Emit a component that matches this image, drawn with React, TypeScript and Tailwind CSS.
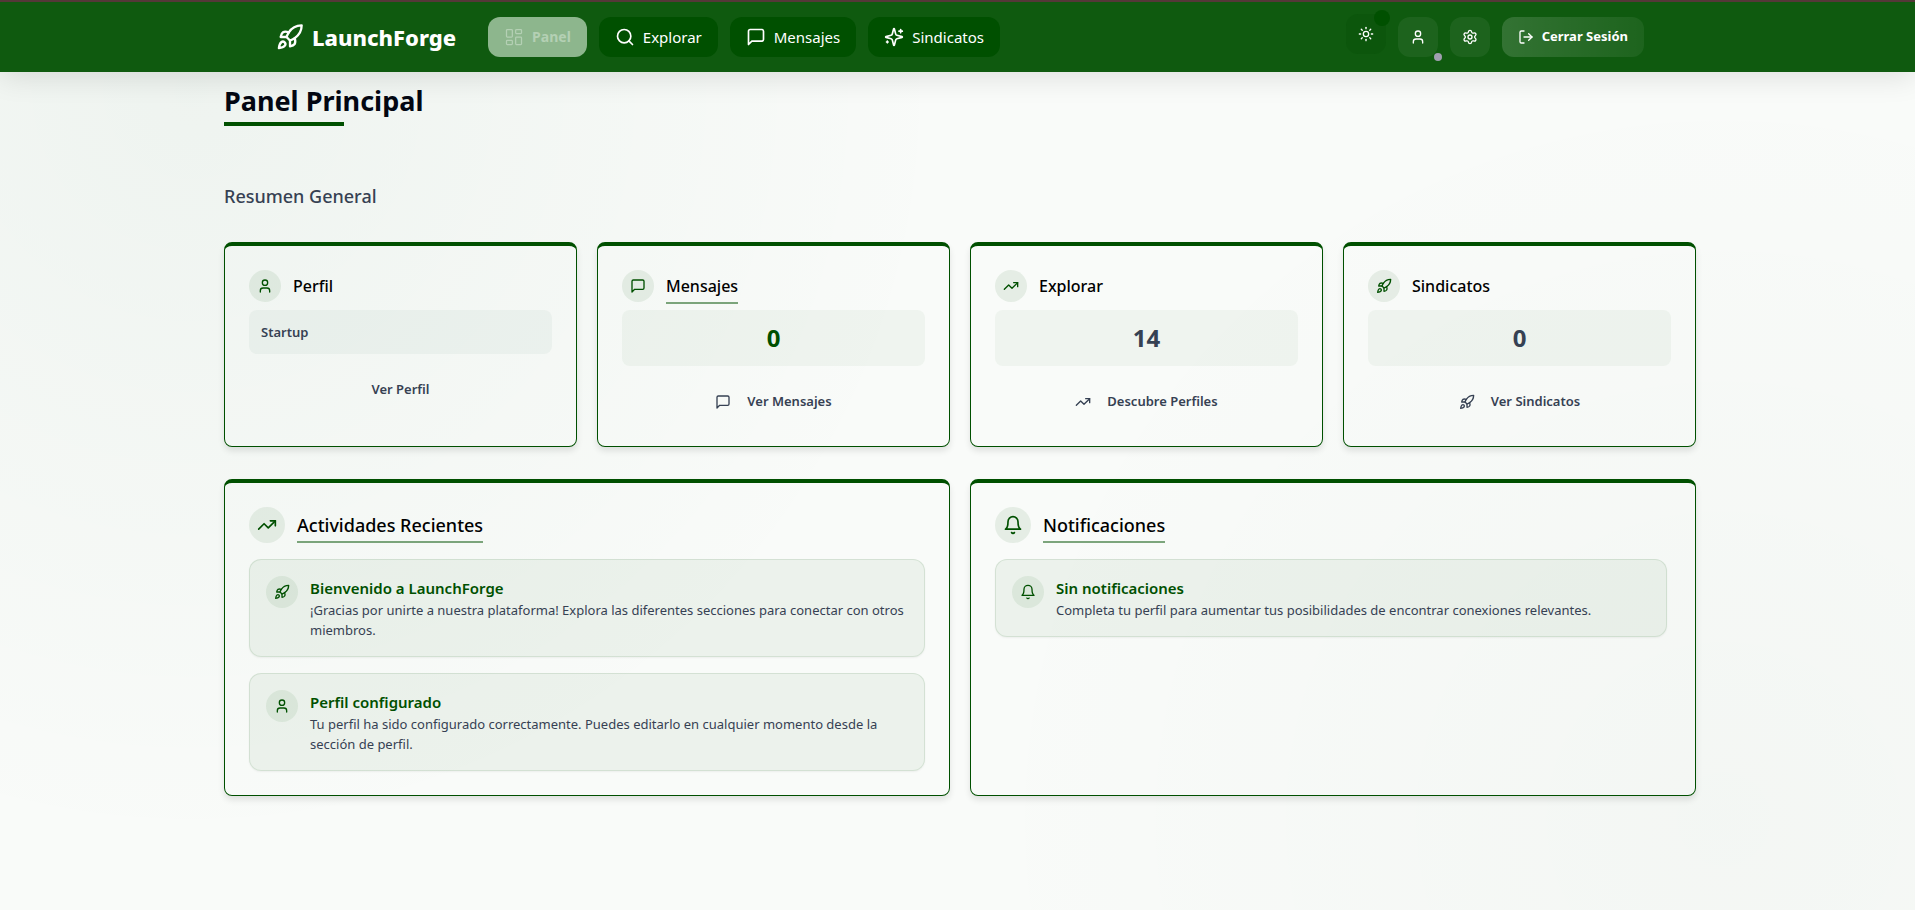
import type { ComponentType, ReactNode } from 'react';
import { LayoutDashboard, LogOut, Rocket, Search, Settings, Sun, TrendingUp, User } from 'lucide-react';

interface IconProps {
  size?: number;
}

type Icon = ComponentType<IconProps>;

function StrokeIcon({ size = 24, children }: IconProps & { children: ReactNode }) {
  return (
    <svg
      width={size}
      height={size}
      viewBox="0 0 24 24"
      fill="none"
      stroke="currentColor"
      strokeWidth={2}
      strokeLinecap="round"
      strokeLinejoin="round"
      aria-hidden="true"
    >
      {children}
    </svg>
  );
}

function Message({ size }: IconProps) {
  return (
    <StrokeIcon size={size}>
      <path d="M21 15a2 2 0 0 1-2 2H7l-4 4V5a2 2 0 0 1 2-2h14a2 2 0 0 1 2 2z" />
    </StrokeIcon>
  );
}

function Sparkles({ size }: IconProps) {
  return (
    <StrokeIcon size={size}>
      <path d="M9.937 15.5A2 2 0 0 0 8.5 14.063l-6.135-1.582a.5.5 0 0 1 0-.962L8.5 9.936A2 2 0 0 0 9.937 8.5l1.582-6.135a.5.5 0 0 1 .963 0L14.063 8.5A2 2 0 0 0 15.5 9.937l6.135 1.581a.5.5 0 0 1 0 .964L15.5 14.063a2 2 0 0 0-1.437 1.437l-1.582 6.135a.5.5 0 0 1-.963 0z" />
      <path d="M20 3v4M22 5h-4M4 17v2M5 18H3" />
    </StrokeIcon>
  );
}

function Bell({ size }: IconProps) {
  return (
    <StrokeIcon size={size}>
      <path d="M6 8a6 6 0 0 1 12 0c0 7 3 9 3 9H3s3-2 3-9" />
      <path d="M10.3 21a1.94 1.94 0 0 0 3.4 0" />
    </StrokeIcon>
  );
}

const navItems = [
  { label: 'Explorar', icon: Search },
  { label: 'Mensajes', icon: Message },
  { label: 'Sindicatos', icon: Sparkles },
];

const activities = [
  {
    icon: Rocket,
    title: 'Bienvenido a LaunchForge',
    text: '¡Gracias por unirte a nuestra plataforma! Explora las diferentes secciones para conectar con otros miembros.',
  },
  {
    icon: User,
    title: 'Perfil configurado',
    text: 'Tu perfil ha sido configurado correctamente. Puedes editarlo en cualquier momento desde la sección de perfil.',
  },
];

export default function App() {
  return (
    <div className="min-h-screen overflow-hidden bg-[#f9fbf9] bg-[radial-gradient(circle_at_10%_10%,rgba(0,80,30,0.045),transparent_40%),radial-gradient(circle_at_90%_90%,rgba(0,60,20,0.025),transparent_40%)] font-['Noto_Sans','Open_Sans',sans-serif] text-gray-700">
      <Navbar />

      <div className="pl-[5px]">
        <main className="mx-auto max-w-[1536px] px-8 pt-2 pb-16">
          <h1 className="relative inline-block text-[27px] leading-[42px] font-bold text-gray-950">
            Panel Principal
            <span className="absolute -bottom-1 left-0 h-1 w-3/5 bg-[#005000]" />
          </h1>

          <h2 className="mt-15 mb-8 text-lg leading-7 font-medium">Resumen General</h2>

          <div className="grid grid-cols-1 gap-5 md:grid-cols-2 lg:grid-cols-4">
            <Card>
              <CardTitle icon={User} title="Perfil" />
              <div className="mt-2 rounded-lg bg-[#005030]/4 p-3 text-[13px] leading-5 font-semibold">Startup</div>
              <CardButton label="Ver Perfil" />
            </Card>
            <Card>
              <CardTitle icon={Message} title="Mensajes" underline />
              <div className="mt-2 rounded-lg bg-[#005000]/4 p-3 text-center text-2xl font-bold text-[#005000]">0</div>
              <CardButton icon={Message} label="Ver Mensajes" />
            </Card>
            <Card>
              <CardTitle icon={TrendingUp} title="Explorar" />
              <div className="mt-2 rounded-lg bg-[#005000]/4 p-3 text-center text-2xl font-bold">14</div>
              <CardButton icon={TrendingUp} label="Descubre Perfiles" />
            </Card>
            <Card>
              <CardTitle icon={Rocket} title="Sindicatos" />
              <div className="mt-2 rounded-lg bg-[#005000]/4 p-3 text-center text-2xl font-bold">0</div>
              <CardButton icon={Rocket} label="Ver Sindicatos" />
            </Card>
          </div>

          <div className="mt-8 grid grid-cols-1 gap-5 lg:grid-cols-2">
            <Card>
              <SectionTitle icon={TrendingUp} title="Actividades Recientes" />
              <div className="mt-4 space-y-4">
                {activities.map(item => (
                  <FeedItem key={item.title} icon={item.icon} title={item.title} text={item.text} />
                ))}
              </div>
            </Card>
            <Card>
              <SectionTitle icon={Bell} title="Notificaciones" />
              <div className="mt-4 pr-1">
                <FeedItem
                  icon={Bell}
                  title="Sin notificaciones"
                  text="Completa tu perfil para aumentar tus posibilidades de encontrar conexiones relevantes."
                />
              </div>
            </Card>
          </div>
        </main>
      </div>
    </div>
  );
}

function Navbar() {
  return (
    <header className="border-t-2 border-[#553838] bg-[#0f5a0f] pl-[5px] text-white shadow-[0_4px_30px_rgba(0,0,0,0.12)]">
      <div className="mx-auto flex h-[70px] max-w-[1400px] items-center justify-between px-4">
        <div className="flex items-center">
          <a href="#" className="mr-8 flex items-center gap-2">
            <Rocket size={28} />
            <span className="text-[22px] leading-8 font-extrabold">LaunchForge</span>
          </a>
          <nav className="flex items-center gap-3">
            <a href="#" className="flex h-10 items-center gap-2 rounded-xl bg-[#8db68d] px-4 text-sm font-bold text-[#b4d0b4]">
              <LayoutDashboard size={20} strokeWidth={1.5} />
              Panel
            </a>
            {navItems.map(({ label, icon: Icon }) => (
              <a key={label} href="#" className="flex h-10 items-center gap-2 rounded-xl bg-[#005000] px-4 text-[15px]">
                <Icon size={20} />
                {label}
              </a>
            ))}
          </nav>
        </div>

        <div className="flex items-center gap-3">
          <button aria-label="Cambiar tema" className="relative -top-[3px] flex size-10 items-center justify-center rounded-xl bg-[#0c560c]">
            <Sun size={16} />
            <span className="absolute -top-1 -right-1 size-4 rounded-full bg-[#005000]" />
          </button>
          <button aria-label="Perfil" className="relative flex size-10 items-center justify-center rounded-xl bg-white/6">
            <User size={16} />
            <span className="absolute -right-1 -bottom-1 size-2 rounded-full bg-[#a09fb0]" />
          </button>
          <button aria-label="Ajustes" className="flex size-10 items-center justify-center rounded-xl bg-white/6">
            <Settings size={16} />
          </button>
          <button className="flex h-10 items-center gap-2 rounded-xl bg-linear-to-r from-white/15 to-white/6 px-4 text-[13px] font-bold">
            <LogOut size={16} />
            Cerrar Sesión
          </button>
        </div>
      </div>
    </header>
  );
}

function Card({ children }: { children: ReactNode }) {
  return (
    <section className="rounded-lg border border-t-4 border-[#005000] p-6 shadow-[0_4px_6px_rgba(0,0,0,0.1)]">
      {children}
    </section>
  );
}

function CardTitle({ icon: Icon, title, underline }: { icon: Icon; title: string; underline?: boolean }) {
  return (
    <div className="flex items-center gap-3">
      <span className="flex size-8 items-center justify-center rounded-full bg-[#005000]/8 text-[#005000]">
        <Icon size={16} />
      </span>
      <h3 className="relative text-base leading-7 font-medium text-black">
        {title}
        {underline && <span className="absolute -bottom-1 left-0 h-0.5 w-full bg-[#005000]/50" />}
      </h3>
    </div>
  );
}

function CardButton({ icon: Icon, label }: { icon?: Icon; label: string }) {
  return (
    <button className="mt-4 flex h-10 w-full items-center justify-center gap-4 text-[13px] font-semibold">
      {Icon && <Icon size={16} />}
      {label}
    </button>
  );
}

function SectionTitle({ icon: Icon, title }: { icon: Icon; title: string }) {
  return (
    <div className="flex items-center gap-3">
      <span className="flex size-9 items-center justify-center rounded-full bg-[#005000]/8 text-[#005000]">
        <Icon size={20} />
      </span>
      <h3 className="relative text-lg leading-7 font-medium text-black">
        {title}
        <span className="absolute -bottom-1 left-0 h-0.5 w-full bg-[#005000]/50" />
      </h3>
    </div>
  );
}

function FeedItem({ icon: Icon, title, text }: { icon: Icon; title: string; text: string }) {
  return (
    <div className="flex items-start gap-3 rounded-xl border border-[#005000]/10 bg-[#005000]/5 p-4 shadow-xs">
      <span className="flex size-8 shrink-0 items-center justify-center rounded-full bg-[#005000]/7 text-[#005000]">
        <Icon size={16} />
      </span>
      <div>
        <h4 className="text-[15px] leading-6 font-semibold text-[#005000]">{title}</h4>
        <p className="text-[13px] leading-5">{text}</p>
      </div>
    </div>
  );
}
